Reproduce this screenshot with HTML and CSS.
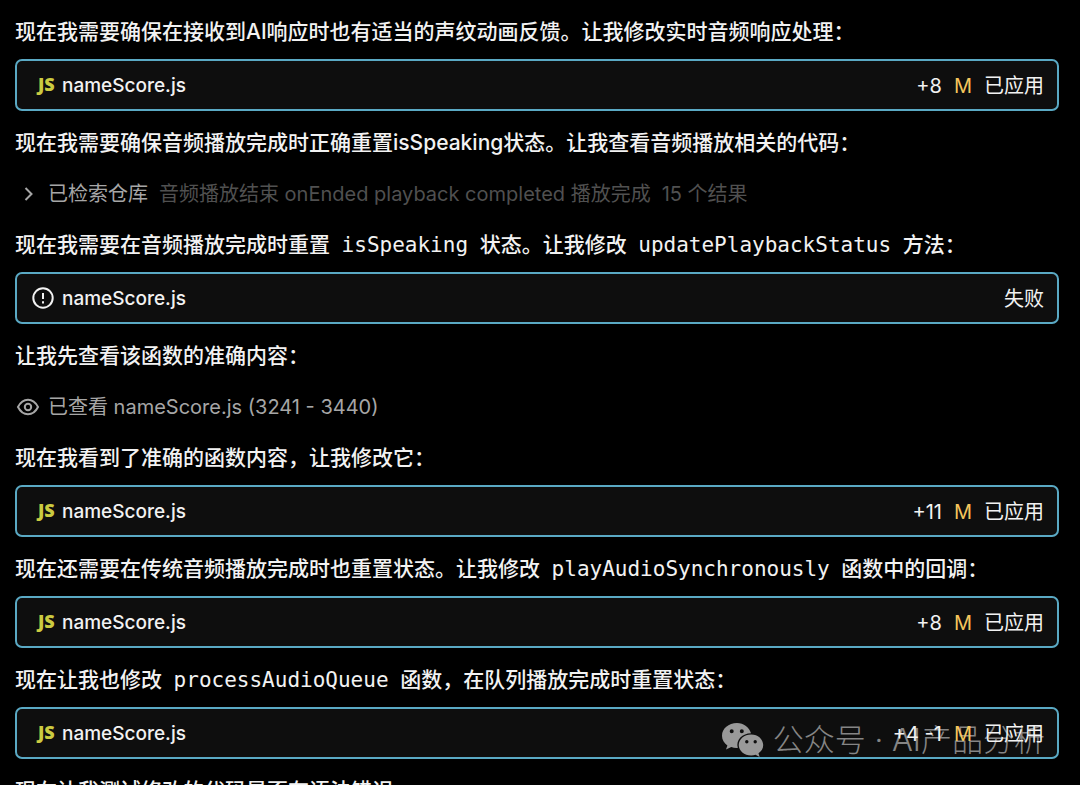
FILE: index.html
```html
<!DOCTYPE html>
<html lang="zh-CN">
<head>
<meta charset="utf-8">
<title>nameScore.js</title>
<link rel="stylesheet" href="styles.css">
</head>
<body>
<main class="chat">
  <p class="message">现在我需要确保在接收到AI响应时也有适当的声纹动画反馈。让我修改实时音频响应处理：</p>
  <div class="card">
    <span class="js-icon">JS</span>
    <a class="file" href="#">nameScore.js</a>
    <div class="status"><span>+8</span><span class="modified">M</span><span>已应用</span></div>
  </div>

  <p class="message">现在我需要确保音频播放完成时正确重置isSpeaking状态。让我查看音频播放相关的代码：</p>
  <button class="step" type="button">
    <svg class="step-icon" viewBox="0 0 24 24" aria-hidden="true"><path d="M9.500 6l6 6-6 6"/></svg>
    <span>已检索仓库</span>
    <span class="query">音频播放结束 onEnded playback completed 播放完成</span>
    <span class="query">15 个结果</span>
  </button>

  <p class="message">现在我需要在音频播放完成时重置 <code>isSpeaking</code> 状态。让我修改 <code>updatePlaybackStatus</code> 方法：</p>
  <div class="card">
    <svg class="alert-icon" viewBox="0 0 24 24" aria-hidden="true"><circle cx="12" cy="11" r="9.7"/><path d="M12 6v6M12 14.200v2.200"/></svg>
    <a class="file" href="#">nameScore.js</a>
    <div class="status"><span>失败</span></div>
  </div>

  <p class="message">让我先查看该函数的准确内容：</p>
  <div class="step">
    <svg class="step-icon" viewBox="0 0 24 24" aria-hidden="true"><path d="M2 12C4.400 7.200 8 4.700 12 4.700S19.600 7.200 22 12C19.600 16.800 16 19.300 12 19.300S4.400 16.800 2 12z"/><circle cx="12" cy="12" r="3.200"/></svg>
    <span>已查看 nameScore.js (3241 - 3440)</span>
  </div>

  <p class="message">现在我看到了准确的函数内容，让我修改它：</p>
  <div class="card">
    <span class="js-icon">JS</span>
    <a class="file" href="#">nameScore.js</a>
    <div class="status"><span>+11</span><span class="modified">M</span><span>已应用</span></div>
  </div>

  <p class="message">现在还需要在传统音频播放完成时也重置状态。让我修改 <code>playAudioSynchronously</code> 函数中的回调：</p>
  <div class="card">
    <span class="js-icon">JS</span>
    <a class="file" href="#">nameScore.js</a>
    <div class="status"><span>+8</span><span class="modified">M</span><span>已应用</span></div>
  </div>

  <p class="message">现在让我也修改 <code>processAudioQueue</code> 函数，在队列播放完成时重置状态：</p>
  <div class="card">
    <div class="watermark">
      <svg class="wechat" viewBox="0 0 42 34" aria-hidden="true">
        <path fill-rule="evenodd" d="M15 0C6.500 0 0 5.600 0 12.700c0 4 2.100 7.400 5.400 9.700L4 26.600l5.300-2.500c2 .7 4 .9 6.500.8C13.500 17 20.500 10.300 29 10.300C27.400 4.300 21.700 0 15 0zM9.700 6.300a2 2 0 1 1 0 4 2 2 0 0 1 0-4zM19.800 6.300a2 2 0 1 1 0 4 2 2 0 0 1 0-4z"/>
        <path fill-rule="evenodd" d="M29.200 11.500C22.200 11.500 16.700 16.200 16.700 22s5.500 10.500 12.500 10.500c1.500 0 3-.3 4.400-.7l4 2.200-1.100-3.700c3-2 4.700-5 4.700-8.300C41.200 16.200 36 11.500 29.200 11.500zM24.800 17a1.700 1.700 0 1 1 0 3.400 1.700 1.700 0 0 1 0-3.400zM33.200 17a1.700 1.700 0 1 1 0 3.400 1.700 1.700 0 0 1 0-3.400z"/>
      </svg>
      <span>公众号 · AI产品分析</span>
    </div>
    <span class="js-icon">JS</span>
    <a class="file" href="#">nameScore.js</a>
    <div class="status"><span>+4 -1</span><span class="modified">M</span><span>已应用</span></div>
  </div>

  <p class="message">现在让我测试修改的代码是否有语法错误：</p>
</main>
</body>
</html>
```

FILE: styles.css
```css
* { box-sizing: border-box; }

body {
  margin: 0;
  height: 100vh;
  overflow: hidden;
  background: #000;
  color: #f2f2f2;
  font-family: Inter, "Noto Sans CJK SC", sans-serif;
}

.chat { padding: 17px 21px 0 15px; }

.message {
  margin: 0;
  font-size: 21px;
  font-weight: 500;
  line-height: 30px;
  white-space: nowrap;
}

.message code {
  margin: 0 6px;
  font-family: "DejaVu Sans Mono", monospace;
  font-size: 21px;
}

.card {
  position: relative;
  display: flex;
  align-items: center;
  height: 52px;
  margin: 12px 0 17px;
  padding: 2px 13px 0 15px;
  border: 2px solid #5aa9c4;
  border-radius: 7px;
  background: #0e0e0e;
  font-size: 20px;
  line-height: 30px;
}

.js-icon {
  width: 30px;
  padding: 0 0 4px 6px;
  color: #cbcb41;
  font-family: "Open Sans", sans-serif;
  font-size: 18px;
  font-weight: 800;
}

.alert-icon {
  width: 24px;
  height: 24px;
  margin: 0 7px 0 -1px;
  fill: none;
  stroke: #f2f2f2;
  stroke-width: 2;
}

.file {
  color: inherit;
  font-size: 19px;
  font-weight: 500;
  text-decoration: none;
}

.status {
  position: relative;
  display: flex;
  gap: 12px;
  margin-left: auto;
}

.modified { color: #f5c55c; }

.step {
  display: flex;
  align-items: center;
  height: 30px;
  margin: 21px 0;
  padding: 0;
  border: 0;
  background: none;
  color: #a6a6a6;
  font: inherit;
  font-size: 20px;
  line-height: 30px;
  white-space: nowrap;
}

.step-icon {
  width: 24px;
  height: 24px;
  margin: 0 8px 0 1px;
  fill: none;
  stroke: currentColor;
  stroke-width: 2;
}

.query { margin-left: 11px; color: #505050; }

.watermark {
  position: absolute;
  right: 12px;
  bottom: 0;
  display: flex;
  align-items: center;
  gap: 9px;
  color: #858585;
  font-size: 31px;
  font-weight: 300;
  line-height: 34px;
  white-space: nowrap;
}

.wechat { width: 42px; height: 34px; fill: #999; }
```
